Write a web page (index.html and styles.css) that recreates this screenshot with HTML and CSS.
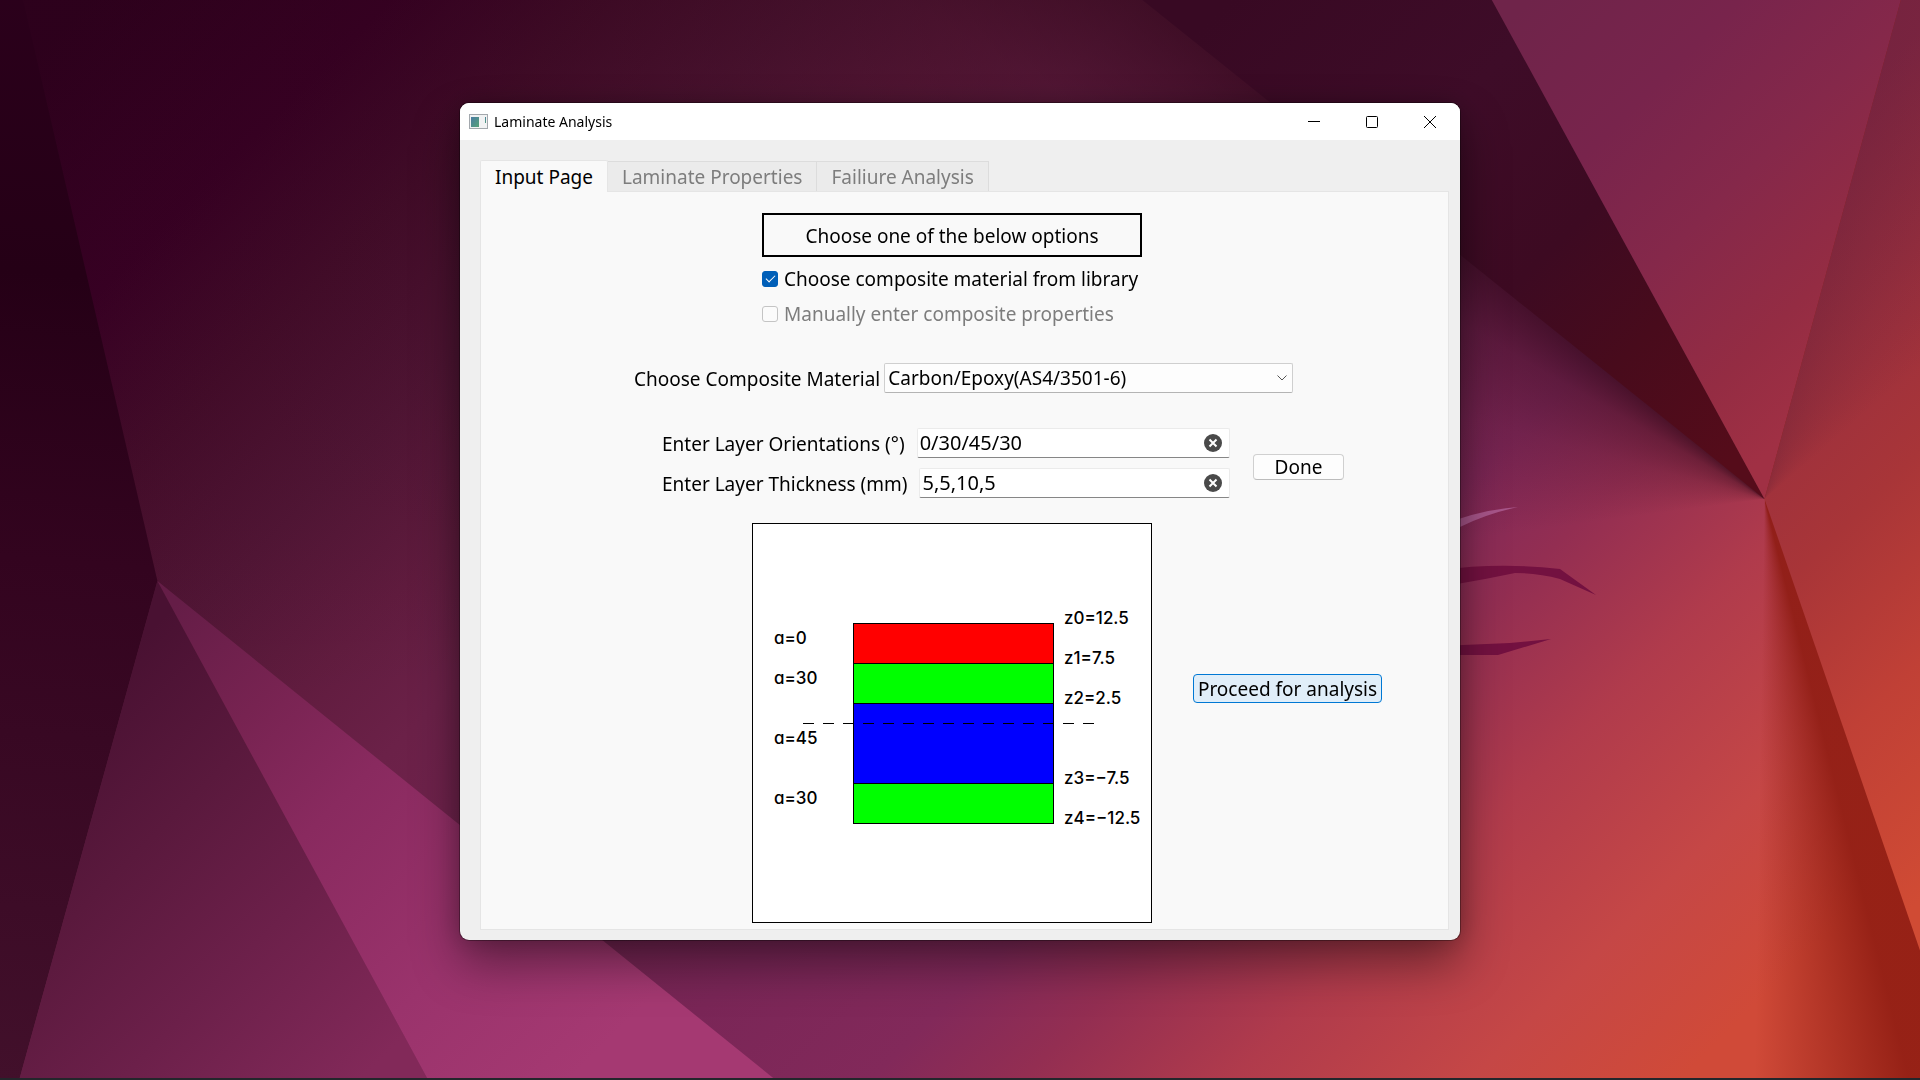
FILE: index.html
```html
<!DOCTYPE html>
<html lang="en">
<head>
<meta charset="utf-8">
<title>Laminate Analysis</title>
<link rel="stylesheet" href="styles.css">
</head>
<body>
<div class="wallpaper" aria-hidden="true">
  <div class="facet facet-base"></div>
  <div class="facet facet-shade"></div>
  <div class="facet facet-left"></div>
  <div class="facet facet-lower-left"></div>
  <div class="facet facet-magenta"></div>
  <div class="facet facet-ridge"></div>
  <div class="facet facet-rose"></div>
  <div class="facet facet-right"></div>
  <svg class="facet claws" viewBox="0 0 1920 1080" preserveAspectRatio="none">
    <path fill="#a8568a" d="M1440 526Q1478 510 1518 507Q1486 514 1460 527L1440 536Z"/>
    <path fill="#731140" d="M1440 570Q1500 562 1560 569L1596 595L1560 579Q1538 573 1515 573L1485 579L1440 587Z"/>
    <path fill="#731140" d="M1440 646L1510 643L1551 639L1498 655H1440Z"/>
  </svg>
</div>
<div class="desktop">
  <main class="window">
    <header class="titlebar">
      <svg class="app-icon" viewBox="0 0 19 15" aria-hidden="true">
        <defs><linearGradient id="pane" x1="0" y1="0" x2="1" y2="1"><stop offset="0" stop-color="#4a7ba3"/><stop offset="1" stop-color="#55a277"/></linearGradient></defs>
        <rect x=".5" y=".5" width="18" height="14" fill="#f1f2f3" stroke="#a3a8ad"/>
        <rect x="2" y="3" width="8" height="10" fill="url(#pane)"/>
        <rect x="16" y="3" width="1" height="6" fill="url(#pane)"/>
      </svg>
      <h1 class="title">Laminate Analysis</h1>
      <div class="window-controls">
        <button type="button" class="control" aria-label="Minimize"><svg viewBox="0 0 14 14"><path d="M1 6.500H13"/></svg></button>
        <button type="button" class="control" aria-label="Maximize"><svg viewBox="0 0 14 14"><rect x="1.500" y="1.500" width="11" height="11" rx="1"/></svg></button>
        <button type="button" class="control" aria-label="Close"><svg viewBox="0 0 14 14"><path d="M1 1L13 13M13 1L1 13"/></svg></button>
      </div>
    </header>
    <div class="content">
      <div class="tabs" role="tablist">
        <button type="button" class="tab tab-active" role="tab" aria-selected="true">Input Page</button>
        <button type="button" class="tab" role="tab" aria-selected="false" disabled>Laminate Properties</button>
        <button type="button" class="tab" role="tab" aria-selected="false" disabled>Failiure Analysis</button>
      </div>
      <form class="panel">
        <div class="options">
          <p class="prompt">Choose one of the below options</p>
          <label class="option"><input type="checkbox" checked>Choose composite material from library</label>
          <label class="option option-off"><input type="checkbox" disabled>Manually enter composite properties</label>
        </div>
        <div class="material">
          <label for="material">Choose Composite Material</label>
          <span class="select-box">
            <select id="material"><option>Carbon/Epoxy(AS4/3501-6)</option></select>
            <svg class="chevron" viewBox="0 0 10 6" aria-hidden="true"><path d="M.5 .5L5 5L9.500 .5"/></svg>
          </span>
        </div>
        <div class="layers">
          <div class="layer-fields">
            <div class="field">
              <label for="orientations">Enter Layer Orientations (°)</label>
              <span class="text-box">
                <input id="orientations" type="text" value="0/30/45/30">
                <button type="button" class="clear" aria-label="Clear orientations"><svg viewBox="0 0 18 18"><circle cx="9" cy="9" r="9"/><path d="M5.500 5.500L12.500 12.500M12.500 5.500L5.500 12.500"/></svg></button>
              </span>
            </div>
            <div class="field">
              <label for="thickness">Enter Layer Thickness (mm)</label>
              <span class="text-box">
                <input id="thickness" type="text" value="5,5,10,5">
                <button type="button" class="clear" aria-label="Clear thickness"><svg viewBox="0 0 18 18"><circle cx="9" cy="9" r="9"/><path d="M5.500 5.500L12.500 12.500M12.500 5.500L5.500 12.500"/></svg></button>
              </span>
            </div>
          </div>
          <button type="button" class="button done">Done</button>
        </div>
        <div class="result">
          <svg class="diagram" viewBox="0 0 400 400">
            <rect class="frame" x=".5" y=".5" width="399" height="399"/>
            <g class="plies">
              <rect x="101.500" y="100.500" width="200" height="40" fill="#f00"/>
              <rect x="101.500" y="140.500" width="200" height="40" fill="#0f0"/>
              <rect x="101.500" y="180.500" width="200" height="80" fill="#00f"/>
              <rect x="101.500" y="260.500" width="200" height="40" fill="#0f0"/>
            </g>
            <path class="midplane" d="M51 200.500H342"/>
            <g class="labels">
              <text x="22" y="121">a=0</text>
              <text x="22" y="161">a=30</text>
              <text x="22" y="221">a=45</text>
              <text x="22" y="281">a=30</text>
              <text x="312" y="101">z0=12.5</text>
              <text x="312" y="141">z1=7.5</text>
              <text x="312" y="181">z2=2.5</text>
              <text x="312" y="261">z3=−7.5</text>
              <text x="312" y="301">z4=−12.5</text>
            </g>
          </svg>
          <button type="submit" class="button proceed">Proceed for analysis</button>
        </div>
      </form>
    </div>
  </main>
</div>
</body>
</html>
```

FILE: styles.css
```css
* { box-sizing: border-box; }

body {
  margin: 0;
  background: #3a0826;
  color: #000;
  font: 19px/28px "Noto Sans", "DejaVu Sans", sans-serif;
}

button, input, select { font: inherit; color: inherit; }
label, .tab, .button { white-space: nowrap; }

/* Faceted wallpaper: every facet fills the screen and is clipped to its shape */
.wallpaper {
  position: fixed;
  inset: 0;
  display: grid;
  overflow: hidden;
}
.wallpaper::after {
  content: "";
  grid-area: 1 / 1;
  z-index: 1;
  align-self: end;
  height: 2px;
  background: #23262b;
}
.facet { grid-area: 1 / 1; width: 100%; height: 100%; }
.claws { z-index: 1; }
.facet-base { background: linear-gradient(135deg, #2e001e 3%, #390025 13%, #450d2b 20%, #521636 27%, #611c3f 33%, #6b2148 38%, #7a2657 57%, #82295a 65%, #932e52 70%, #b03b4c 77%, #c54746 85%, #d04a38 92%); }
.facet-shade { background: conic-gradient(at 91.9% 46.2%, #8c1a10d8 0deg 166deg, #80180f00 181deg, #28041400 262deg, #28041430 285deg, #28041464 300deg, #280414a8 309deg); }
.facet-left {
  background: linear-gradient(185deg, #2d001d 5%, #250016 35%, #33041f 58%, #42102b 100%);
  clip-path: polygon(0 0, 1.2% 0, 8.2% 53.8%, 1% 100%, 0 100%);
}
.facet-lower-left {
  background: linear-gradient(135deg, #491132 26%, #5a193d 33%, #6c204a 40%, #822959 48%);
  clip-path: polygon(8.2% 53.8%, 22.3% 100%, 1% 100%);
}
.facet-magenta {
  background: linear-gradient(135deg, #651d47 26%, #772351 32%, #892a5f 38%, #9a336c 47%, #a53972 55%);
  clip-path: polygon(8.2% 53.8%, 40.4% 100%, 22.3% 100%);
}
.facet-ridge {
  background: linear-gradient(135deg, #380923 41%, #3e0c28 52%, #3d0a22 60%, #480b1c 66%, #550c1a 73%);
  clip-path: polygon(59.5% 0, 77.7% 0, 91.9% 46.2%);
}
.facet-rose {
  background: linear-gradient(135deg, #6f244a 51%, #78244c 58%, #85284a 64%, #942c43 70%, #a03044 74%);
  clip-path: polygon(77.7% 0, 99% 0, 91.9% 46.2%);
}
.facet-right {
  background:
    conic-gradient(at 91.9% 46.2%, #4a183040 14deg, #4a183030 22deg, #4a183000 50deg),
    linear-gradient(135deg, #852744 65%, #9c303e 73%, #a83538 79%, #c04036 86%, #d04b34 94%);
  clip-path: polygon(99% 0, 100% 0, 100% 88%, 91.9% 46.2%);
}

.desktop {
  position: relative;
  min-height: 100vh;
  padding: 103px 16px 64px;
}

.window {
  width: 100%;
  max-width: 1000px;
  margin: 0 auto;
  border-radius: 9px;
  overflow: hidden;
  background: #efefef;
  box-shadow: 0 0 0 1px #0005, 0 24px 48px #0006, 0 0 24px #0003;
}

.titlebar {
  display: flex;
  align-items: center;
  height: 37px;
  padding: 0 1px 0 9px;
  background: #fff;
}
.app-icon { width: 19px; height: 15px; }
.title {
  flex: 1;
  margin: 0 6px;
  font-size: 14px;
  font-weight: 400;
  line-height: 20px;
}
.window-controls { display: flex; }
.control {
  display: grid;
  place-items: center;
  width: 58px;
  height: 36px;
  padding: 0;
  border: 0;
  background: none;
}
.control svg { width: 14px; height: 14px; fill: none; stroke: #000; stroke-width: 1; }

.content { padding: 20px 11px 10px 20px; }

.tabs { display: flex; align-items: flex-end; }
.tab {
  height: 30px;
  padding: 0 14px;
  border: 1px solid #dcdcdc;
  border-width: 1px 1px 0 0;
  background: #ebebeb;
  color: #7d7d7d;
  line-height: 28px;
}
.tab-active {
  position: relative;
  height: 32px;
  margin-bottom: -1px;
  border: 1px solid #e5e5e5;
  border-bottom: 0;
  border-radius: 2px 2px 0 0;
  background: #f9f9f9;
  color: #000;
}

.panel {
  padding: 21px 25px 6px 0;
  border: 1px solid #e5e5e5;
  background: #f9f9f9;
}

.options { width: 380px; margin: 0 auto; }
.prompt {
  margin: 0 0 4px;
  padding: 7px 6px 5px;
  border: 2px solid #000;
  text-align: center;
}
.option { display: flex; align-items: center; gap: 6px; height: 35px; }
.option-off { color: #7d7d7d; }
.option input {
  appearance: none;
  width: 16px;
  height: 16px;
  margin: 0;
  border: 1px solid #c4c4c4;
  border-radius: 3px;
  background: #fbfbfb;
}
.option input:checked {
  display: grid;
  place-items: center;
  border-color: #005fb8;
  background: #005fb8;
}
.option input:checked::before {
  content: "";
  width: 8px;
  height: 4px;
  margin-bottom: 2px;
  border: solid #fff;
  border-width: 0 0 1px 1px;
  rotate: -45deg;
}

.material {
  display: flex;
  align-items: center;
  gap: 4px;
  width: 659px;
  margin: 32px auto 0 153px;
}
.material label, .field label { padding-top: 2px; }
.select-box { position: relative; flex: 1; display: flex; }
.select-box select {
  appearance: none;
  width: 100%;
  height: 30px;
  padding: 0 24px 0 3px;
  border: 1px solid #cfcfcf;
  border-bottom-color: #b4b4b4;
  border-radius: 2px;
  background: #fdfdfd;
}
.chevron {
  position: absolute;
  right: 6px;
  top: 12px;
  width: 10px;
  height: 6px;
  fill: none;
  stroke: #555;
  pointer-events: none;
}

.layers {
  display: flex;
  align-items: center;
  gap: 23px;
  width: 682px;
  margin: 35px auto 0 181px;
}
.layer-fields { flex: 1; min-width: 0; display: grid; grid-template-columns: minmax(0, 1fr); gap: 10px; }
.field { display: flex; align-items: center; gap: 12px; }
.text-box {
  flex: 1;
  min-width: 0;
  display: flex;
  align-items: center;
  height: 30px;
  padding: 0 7px 0 2px;
  border: 1px solid #ebebeb;
  border-bottom-color: #868686;
  border-radius: 2px;
  background: #fff;
}
.text-box input {
  flex: 1;
  min-width: 0;
  height: 28px;
  padding: 0;
  border: 0;
  outline: 0;
  background: none;
  font-size: 20px;
}
.clear { display: flex; padding: 0; border: 0; background: none; }
.clear svg { width: 18px; height: 18px; fill: #4a4a4a; }
.clear path { stroke: #fff; stroke-width: 2; }

.button {
  flex: none;
  padding: 0;
  border: 1px solid #d0d0d0;
  border-bottom-color: #bcbcbc;
  border-radius: 4px;
  background: #fdfdfd;
}
.done { width: 91px; height: 26px; margin-top: 8px; line-height: 24px; }
.proceed {
  justify-self: center;
  align-self: center;
  width: 189px;
  height: 29px;
  margin-bottom: 70px;
  border-color: #0078d4;
  background: #e0eef9;
  line-height: 28px;
}

.result {
  display: grid;
  grid-template-columns: 1fr 400px 1fr;
  margin-top: 25px;
}
.diagram { grid-column: 2; width: 400px; height: 400px; }
.frame { fill: #fff; stroke: #000; }
.plies { stroke: #000; }
.midplane { stroke: #000; stroke-dasharray: 11 9; }
.labels {
  font-family: Inter, "Liberation Sans", sans-serif;
  font-size: 17px;
  font-weight: 500;
  font-feature-settings: "cv11";
}
```
